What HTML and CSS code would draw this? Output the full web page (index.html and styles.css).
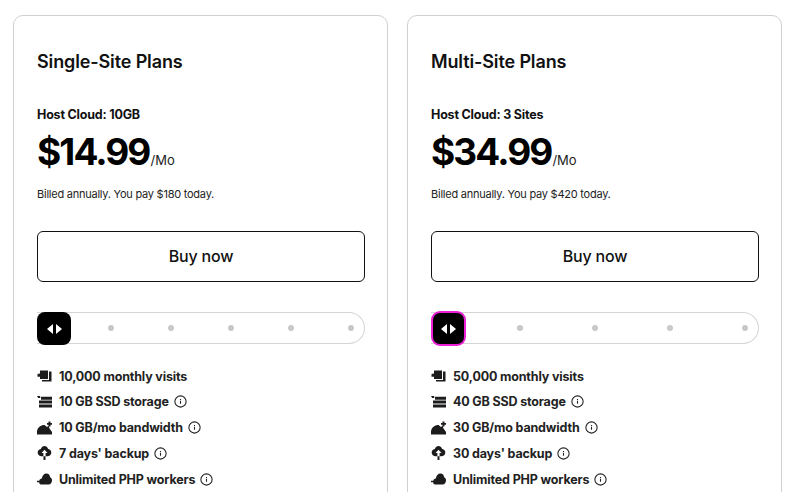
FILE: index.html
```html
<!DOCTYPE html>
<html lang="en">
<head>
<meta charset="utf-8">
<title>Plans</title>
<link rel="stylesheet" href="styles.css">
</head>
<body>
<svg class="defs" width="0" height="0" aria-hidden="true">
  <symbol id="i-visits" viewBox="0 0 15 12"><path d="M3 .5h8V9H3V6.800H.5V4l2.500-.6zM12 1.500h2.500V11.500H5V10h7z"/></symbol>
  <symbol id="i-storage" viewBox="0 0 15 12"><path d="M0 0h3.200v2H1.200zM4 .8h11v3H4zM2 4.600h13v3H2zM2 8.400h13v3H2z"/></symbol>
  <symbol id="i-band" viewBox="0 0 15 13"><path d="M0 13V9.500C.8 6 3.500 3.500 7.500 3.500l2.500 2 1.500-1.200 1 2.700 2.500 3.500V13zM11.500 0h2v1.500H15v1.800h-1.500V5h-2V3.300H10V1.500h1.500z"/></symbol>
  <symbol id="i-backup" viewBox="0 0 14 14"><path d="M7 0c1.500 0 3 1.200 3.700 3 2 .3 3.300 2 3.100 4-.2 1.900-1.700 3.300-3.800 3.300H4C1.900 10.300.4 8.900.2 7 0 5 1.300 3.300 3.300 3 4 1.200 5.500 0 7 0z"/><path class="cut" d="M7 3.800l3 3.200H8.100v3.300H5.900V7H4z"/><path d="M6 10.300h2V14H6z"/></symbol>
  <symbol id="i-php" viewBox="0 0 15 12"><path d="M4 11.500c-1.200 0-1.700-.8-1.700-1.700v-.6H0V7.700h2.300c.2-1.300 1.200-2.100 2.500-2.200C5.300 2.500 7 .5 9.300.5c2.400 0 3.600 1.700 3.800 3.700 1.300.5 1.900 1.700 1.900 3 0 2.400-1.400 4.300-3.300 4.300z"/></symbol>
  <symbol id="i-info" viewBox="0 0 12 12"><circle cx="6" cy="6" r="5.200" fill="none" stroke="currentColor" stroke-width="1"/><path d="M5.500 5.300h1v2.700h-1zM5.500 3.600h1v.9h-1z" fill="currentColor"/></symbol>
</svg>
<main class="plans">
  <section class="card">
    <h2 class="card-title">Single-Site Plans</h2>
    <h3 class="plan-name">Host Cloud: 10GB</h3>
    <p class="price"><span class="amount">$14.99</span><span class="per">/Mo</span></p>
    <p class="billed">Billed annually. You pay $180 today.</p>
    <a class="buy" href="#">Buy now</a>
    <div class="slider">
      <span class="knob"><i class="arrow-l"></i><i class="arrow-r"></i></span>
      <div class="dots dots-five"><i></i><i></i><i></i><i></i><i></i></div>
    </div>
    <ul class="features">
      <li><svg class="ficon"><use href="#i-visits"/></svg>10,000 monthly visits</li>
      <li><svg class="ficon"><use href="#i-storage"/></svg>10 GB SSD storage<svg class="info"><use href="#i-info"/></svg></li>
      <li><svg class="ficon"><use href="#i-band"/></svg>10 GB/mo bandwidth<svg class="info"><use href="#i-info"/></svg></li>
      <li><svg class="ficon"><use href="#i-backup"/></svg>7 days' backup<svg class="info"><use href="#i-info"/></svg></li>
      <li><svg class="ficon"><use href="#i-php"/></svg>Unlimited PHP workers<svg class="info"><use href="#i-info"/></svg></li>
    </ul>
  </section>
  <section class="card">
    <h2 class="card-title">Multi-Site Plans</h2>
    <h3 class="plan-name">Host Cloud: 3 Sites</h3>
    <p class="price"><span class="amount">$34.99</span><span class="per">/Mo</span></p>
    <p class="billed">Billed annually. You pay $420 today.</p>
    <a class="buy" href="#">Buy now</a>
    <div class="slider">
      <span class="knob knob-focus"><i class="arrow-l"></i><i class="arrow-r"></i></span>
      <div class="dots dots-four"><i></i><i></i><i></i><i></i></div>
    </div>
    <ul class="features">
      <li><svg class="ficon"><use href="#i-visits"/></svg>50,000 monthly visits</li>
      <li><svg class="ficon"><use href="#i-storage"/></svg>40 GB SSD storage<svg class="info"><use href="#i-info"/></svg></li>
      <li><svg class="ficon"><use href="#i-band"/></svg>30 GB/mo bandwidth<svg class="info"><use href="#i-info"/></svg></li>
      <li><svg class="ficon"><use href="#i-backup"/></svg>30 days' backup<svg class="info"><use href="#i-info"/></svg></li>
      <li><svg class="ficon"><use href="#i-php"/></svg>Unlimited PHP workers<svg class="info"><use href="#i-info"/></svg></li>
    </ul>
  </section>
</main>
</body>
</html>
```
FILE: styles.css
```css
* { box-sizing: border-box; }
html, body { margin: 0; height: 100%; overflow: hidden; background: #fff; }
body { font-family: Inter, "Liberation Sans", sans-serif; color: #111; }
.defs { position: absolute; }
.plans { display: grid; grid-template-columns: 375px 375px; gap: 19px; padding: 15px 0 0 13px; height: 492px; overflow: hidden; }
.card { border: 1px solid #d0d0d0; border-radius: 10px; padding: 34px 22px 40px 23px; height: 640px; }
.card-title { margin: 0; font-size: 18px; line-height: 24px; font-weight: 600; letter-spacing: -.13px; color: #111; }
.plan-name { margin: 32px 0 0; font-size: 12.5px; line-height: 18px; font-weight: 700; letter-spacing: -.2px; }
.price { margin: 6px 0 0; display: flex; align-items: baseline; height: 44px; line-height: 44px; }
.amount { font-size: 37px; font-weight: 700; letter-spacing: -1.9px; color: #000; }
.per { font-size: 13px; font-weight: 400; margin-left: 1px; color: #222; }
.billed { margin: 12px 0 0; font-size: 11px; line-height: 16px; letter-spacing: -.24px; color: #222; }
.buy { display: flex; align-items: center; justify-content: center; margin-top: 29px; height: 51px; padding-bottom: 2px; border: 1px solid #111; border-radius: 6px; font-size: 16px; font-weight: 500; letter-spacing: -.2px; color: #111; text-decoration: none; }
.slider { position: relative; margin-top: 30px; height: 32px; border: 1px solid #d4d4d4; border-left: 0; border-radius: 0 16px 16px 0; }
.knob { position: absolute; left: 0; top: -1px; width: 34px; height: 33px; border-radius: 8px; background: #000; display: flex; align-items: center; justify-content: center; gap: 3px; z-index: 1; }
.knob-focus { top: -2px; width: 35px; height: 35px; border-radius: 9px; border: 2px solid #ea1fd6; }
.arrow-l { border: 5px solid transparent; border-left: 0; border-right: 6px solid #fff; }
.arrow-r { border: 5px solid transparent; border-right: 0; border-left: 6px solid #fff; }
.dots { display: flex; justify-content: space-between; align-items: center; height: 100%; padding-right: 10px; }
.dots i { width: 6px; height: 6px; border-radius: 50%; background: #c8c8c8; }
.dots-five { padding-left: 71px; }
.dots-four { padding-left: 86px; }
.features { list-style: none; margin: 19.25px 0 0; padding: 0; }
.features li { display: flex; align-items: center; height: 25.75px; font-size: 12.5px; font-weight: 700; letter-spacing: -.16px; color: #222; }
.ficon { width: 15px; height: 14px; margin-right: 7px; fill: #1c1c1c; flex: none; }
.cut { fill: #fff; }
.info { width: 13px; height: 13px; margin-left: 5px; color: #222; flex: none; }
```
